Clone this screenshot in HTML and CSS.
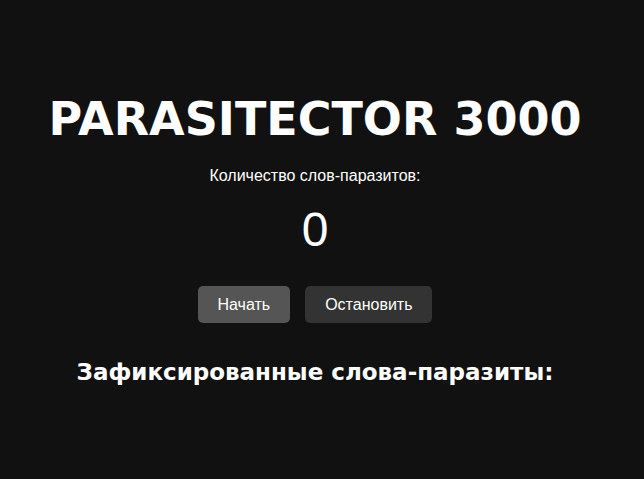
FILE: index.html
```html
<!DOCTYPE html>
<html lang="ru">
<head>
<meta charset="utf-8">
<title>PARASITECTOR 3000</title>
<link rel="stylesheet" href="styles.css">
</head>
<body>
<main class="app">
  <h1 class="title">PARASITECTOR 3000</h1>
  <p class="label">Количество слов-паразитов:</p>
  <div class="count">0</div>
  <div class="controls">
    <button class="btn btn-start">Начать</button>
    <button class="btn btn-stop">Остановить</button>
  </div>
  <h2 class="subtitle">Зафиксированные слова-паразиты:</h2>
</main>
</body>
</html>
```
FILE: styles.css
```css
html, body {
  margin: 0;
  padding: 0;
  background: #111111;
  color: #ffffff;
  height: 100%;
}
body {
  font-family: "Liberation Sans", Arial, sans-serif;
}
.app {
  display: flex;
  flex-direction: column;
  align-items: center;
  padding-top: 90px;
  padding-right: 14px;
}
.title {
  font-family: "DejaVu Sans", sans-serif;
  font-weight: 700;
  font-size: 46px;
  line-height: 58px;
  margin: 0;
}
.label {
  font-size: 16px;
  line-height: 20px;
  margin: 18px 0 0;
}
.count {
  font-size: 48px;
  line-height: 56px;
  margin-top: 16px;
}
.controls {
  display: flex;
  gap: 15px;
  margin-top: 28px;
}
.btn {
  font-family: "Liberation Sans", Arial, sans-serif;
  font-size: 16px;
  color: #ffffff;
  border: none;
  border-radius: 5px;
  height: 37px;
  padding: 0 20px;
  cursor: pointer;
}
.btn-start { background: #555555; }
.btn-stop { background: #333333; }
.subtitle {
  font-family: "DejaVu Sans", sans-serif;
  font-weight: 700;
  font-size: 23px;
  line-height: 30px;
  margin: 34px 0 0;
}
```
